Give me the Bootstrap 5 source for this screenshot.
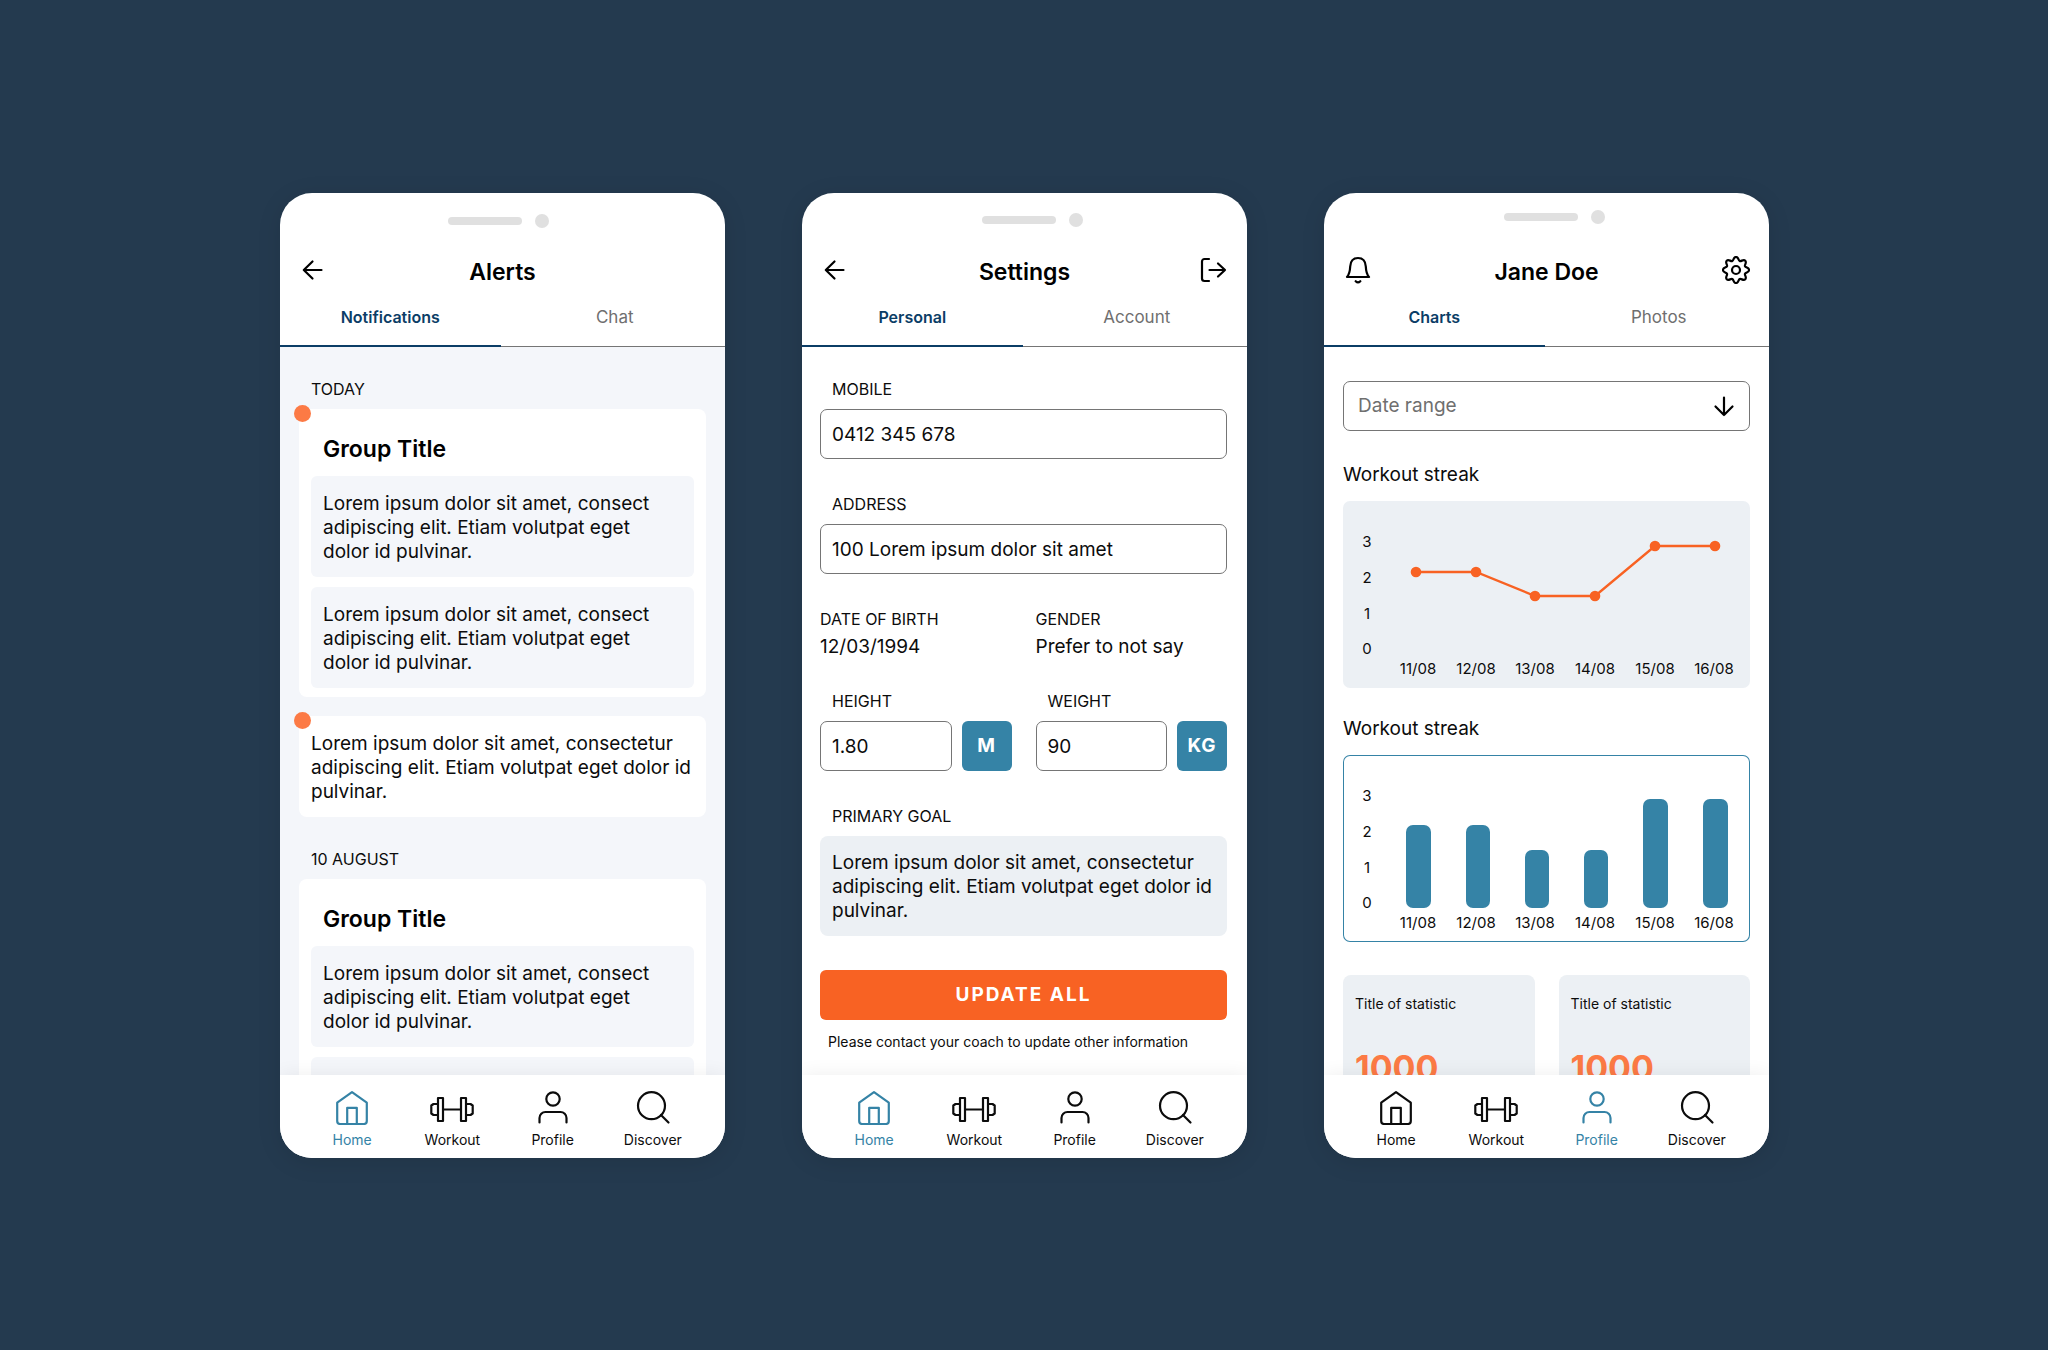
<!DOCTYPE html>
<html lang="en">
<head>
<meta charset="utf-8">
<meta name="viewport" content="width=device-width, initial-scale=1">
<title>Fitness app screens</title>
<link href="https://cdn.jsdelivr.net/npm/bootstrap@5.3.0/dist/css/bootstrap.min.css" rel="stylesheet">
<style>
  :root {
    --navy: #0b3d66;
    --teal: #3583a6;
    --orange: #f86223;
    --coral: #fc7a45;
    --mist: #ecf0f4;
    --haze: #f4f6fa;
    --line: #757575;
  }
  body {
    background: #243a4f;
    color: #0c0c0c;
    font-family: Inter, "Liberation Sans", sans-serif;
    font-size: 19px;
    line-height: 24px;
  }
  .stage { gap: 77px; padding: 1px 0 0 1px; }
  .phone {
    flex: 0 1 445px;
    min-width: 400px;
    aspect-ratio: 445 / 965;
    border-radius: 32px;
    box-shadow: 0 4px 24px rgba(0, 0, 0, .1);
  }
  .earpiece { height: 50px; gap: 13px; padding: 21px 8px 0 0; }
  .earpiece-offset { padding: 20px 0 0 16px; }
  .earpiece-high { padding: 17px 0 0 16px; }
  .earpiece-bar { width: 74px; height: 8px; margin-top: 3px; border-radius: 4px; background: #e0e0e0; }
  .earpiece-dot { width: 14px; height: 14px; border-radius: 50%; background: #e0e0e0; }

  .topbar { height: 54px; padding: 0 19px; }
  .topbar h1 { padding-top: 3px; font-size: 23px; font-weight: 600; line-height: 30px; color: #000; }
  .icon-btn { width: 28px; height: 28px; color: #000; line-height: 0; }

  .tabs .nav-link {
    padding: 8px 0 16px 4px;
    border-radius: 0;
    font-size: 17px;
    color: #6f6f6f;
    border-bottom: 2px solid transparent;
    background: linear-gradient(var(--line), var(--line)) bottom / 100% 1px no-repeat border-box;
  }
  .tabs .nav-link.active {
    padding: 8px 0 16px;
    color: var(--navy);
    font-size: 16px;
    font-weight: 600;
    border-bottom-color: var(--navy);
    background: none;
  }

  .screen { min-height: 0; padding: 32px 20px 0 18px; }
  .screen-feed { padding: 32px 19px 0; background: var(--haze); }
  .screen-stats { padding: 34px 19px 0; }

  .cap { display: block; margin: 0 0 10px 12px; font-size: 16px; line-height: 20px; font-weight: 400; text-transform: uppercase; }
  .cap-flush { margin: 0 0 6px; }

  .tile { border-radius: 8px; background: #fff; }
  .tile-group { padding: 28px 12px 9px; }
  .tile-group h2 { margin: 0 12px 15px; font-size: 23px; line-height: 24px; font-weight: 600; color: #000; }
  .tile-note { padding: 16px 12px 13px; }
  .tile-haze { min-height: 101px; padding-right: 28px; border-radius: 6px; background: var(--haze); }
  .stack { gap: 10px; }
  .feed-gap { margin-bottom: 19px; }
  .day-gap { margin-bottom: 32px; }
  .unread { position: absolute; top: -4px; left: -5px; width: 17px; height: 17px; border-radius: 50%; background: var(--coral); }

  .field { height: 50px; padding: 1px 11px 0; border: 1px solid var(--line); border-radius: 7px; font-size: 19px; line-height: 24px; color: #0c0c0c; background: #fff; }
  .field-gap { margin-bottom: 35px; }
  .fact-gap { margin-bottom: 32px; }
  .cols { column-gap: 24px; }
  .cols > * { flex: 1 1 0; min-width: 0; }
  .unit { flex: none; width: 50px; height: 50px; padding: 0; border: 0; border-radius: 6px; background: var(--teal); color: #fff; font-size: 19px; font-weight: 700; letter-spacing: 1px; }
  .goal { display: block; padding: 15px 12px 13px; border: 0; border-radius: 8px; background: var(--mist); font-size: 19px; line-height: 24px; color: #0c0c0c; resize: none; overflow: hidden; margin-bottom: 34px; }
  .update { height: 50px; padding: 0; border: 0; border-radius: 6px; background: var(--orange); color: #fff; font-size: 19px; font-weight: 700; letter-spacing: 2px; margin-bottom: 12px; }
  .fine { font-size: 14px; line-height: 20px; }
  .fine-inset { margin-left: 8px; }

  .range-field { padding: 0 48px 0 14px; color: #6f6f6f; background-image: none; }
  .range-arrow { position: absolute; top: 11px; right: 12px; width: 28px; height: 28px; pointer-events: none; color: #000; }
  .range-gap { margin-bottom: 32px; }
  .chart-name { margin: 0 0 14px; font-size: 19px; line-height: 24px; font-weight: 400; }
  .chart { display: block; width: 100%; height: auto; border-radius: 7px; font-size: 15px; fill: #0c0c0c; }
  .chart-filled { background: var(--mist); margin-bottom: 29px; }
  .chart-outlined { box-shadow: inset 0 0 0 1px var(--teal); margin-bottom: 33px; }
  .stat { height: 160px; padding: 19px 12px; border-radius: 8px; background: var(--mist); }
  .stat-value { margin-top: 34px; font-size: 34px; line-height: 40px; font-weight: 700; color: var(--coral); }

  .tabbar { position: relative; height: 83px; padding: 16px 22px 0 22px; background: #fff; box-shadow: 0 0 18px rgba(0, 0, 0, .07); }
  .tabbar a { flex: 1 1 0; color: #0c0c0c; text-decoration: none; font-size: 14px; line-height: 20px; }
  .tabbar a.active { color: var(--teal); }
  .tabbar svg { display: block; width: 44px; height: 34px; margin-bottom: 5px; }
  symbol { fill: none; stroke: currentColor; stroke-width: 2.2; stroke-linecap: round; stroke-linejoin: round; }
</style>
</head>
<body>

<svg width="0" height="0" class="position-absolute" aria-hidden="true">
  <symbol id="i-back" viewBox="0 0 28 28"><path d="M22.500 14H5M13.500 5.500 4.800 14l8.700 8.500"/></symbol>
  <symbol id="i-down" viewBox="0 0 28 28"><path d="M14 5.500V23M5.500 14.500 14 23l8.500-8.500"/></symbol>
  <symbol id="i-exit" viewBox="0 0 28 28"><path d="M9 3H4.500A2.500 2.500 0 0 0 2 5.500v17A2.500 2.500 0 0 0 4.500 25H9M9.500 14H25M18 7.500l7 6.500-7 6.500"/></symbol>
  <symbol id="i-bell" viewBox="0 0 28 28"><path d="M4 21C6.600 18 7 15 7.200 10.500 7.500 5 10.500 2 15 2s7.500 3 7.800 8.500C23 15 23.400 18 26 21zM12.700 25.200q2.300 2.300 4.600 0"/></symbol>
  <symbol id="i-gear" viewBox="0 0 28 28"><circle cx="14" cy="14" r="4"/><path d="M14.000 0.900 C16.600 0.900 16.100 4.200 17.700 5.000 C19.300 5.700 21.400 2.900 23.260 4.740 C25.100 6.600 22.300 8.700 23.000 10.300 C23.800 11.900 27.100 11.400 27.100 14.000 C27.100 16.600 23.800 16.100 23.000 17.700 C22.300 19.300 25.100 21.400 23.260 23.260 C21.400 25.100 19.300 22.300 17.700 23.000 C16.100 23.800 16.600 27.100 14.000 27.100 C11.400 27.100 11.900 23.800 10.300 23.000 C8.700 22.300 6.600 25.100 4.740 23.260 C2.900 21.400 5.700 19.300 5.000 17.700 C4.200 16.100 0.900 16.600 0.900 14.000 C0.900 11.400 4.200 11.900 5.000 10.300 C5.700 8.700 2.900 6.600 4.740 4.740 C6.600 2.900 8.700 5.700 10.300 5.000 C11.900 4.200 11.400 0.900 14.000 0.900z"/></symbol>
  <symbol id="i-home" viewBox="0 0 44 34"><path d="M7.200 11.700 22 1.200l14.800 10.500V30a3 3 0 0 1-3 3H10.200a3 3 0 0 1-3-3zM17.200 33V16.800h9.600V33"/></symbol>
  <symbol id="i-gym" viewBox="0 0 44 34"><path d="M8 7h5v23H8zM31 7h5v23h-5zM8 13H3.500L1.300 14.500v8L3.500 24H8M36 13h4.500l2.200 1.500v8L40.500 24H36M13 18.500h18"/></symbol>
  <symbol id="i-user" viewBox="0 0 44 34"><circle cx="22" cy="8" r="6.700"/><path d="M8.500 31.500V27a6 6 0 0 1 6-6h15a6 6 0 0 1 6 6v4.500"/></symbol>
  <symbol id="i-find" viewBox="0 0 44 34"><circle cx="20.500" cy="14.700" r="13.500"/><path d="m30 24 7.500 7.500"/></symbol>
</svg>

<main class="stage min-vh-100 d-flex flex-wrap justify-content-center align-items-center align-content-center">

  <section class="phone bg-white overflow-hidden d-flex flex-column" aria-label="Alerts">
    <div class="earpiece d-flex justify-content-center flex-shrink-0"><span class="earpiece-bar"></span><span class="earpiece-dot"></span></div>
    <header class="topbar d-flex justify-content-between align-items-center flex-shrink-0">
      <button class="icon-btn border-0 bg-transparent p-0" aria-label="Back"><svg width="28" height="28"><use href="#i-back"/></svg></button>
      <h1 class="m-0">Alerts</h1>
      <span class="icon-btn"></span>
    </header>
    <nav class="tabs nav nav-fill nav-justified flex-shrink-0"><a class="nav-link active" href="#">Notifications</a><a class="nav-link" href="#">Chat</a></nav>
    <div class="screen screen-feed flex-grow-1 overflow-hidden">
      <h2 class="cap">Today</h2>
      <article class="tile tile-group feed-gap position-relative">
        <span class="unread"></span>
        <h2>Group Title</h2>
        <div class="stack d-flex flex-column">
          <p class="tile-note tile-haze m-0">Lorem ipsum dolor sit amet, consect adipiscing elit. Etiam volutpat eget dolor id pulvinar.</p>
          <p class="tile-note tile-haze m-0">Lorem ipsum dolor sit amet, consect adipiscing elit. Etiam volutpat eget dolor id pulvinar.</p>
        </div>
      </article>
      <article class="tile tile-note day-gap position-relative">
        <span class="unread"></span>
        Lorem ipsum dolor sit amet, consectetur adipiscing elit. Etiam volutpat eget dolor id pulvinar.
      </article>
      <h2 class="cap">10 August</h2>
      <article class="tile tile-group">
        <h2>Group Title</h2>
        <div class="stack d-flex flex-column">
          <p class="tile-note tile-haze m-0">Lorem ipsum dolor sit amet, consect adipiscing elit. Etiam volutpat eget dolor id pulvinar.</p>
          <p class="tile-note tile-haze m-0"></p>
        </div>
      </article>
    </div>
    <nav class="tabbar d-flex flex-shrink-0" aria-label="Main">
      <a class="active d-flex flex-column align-items-center" href="#"><svg><use href="#i-home"/></svg>Home</a>
      <a class="d-flex flex-column align-items-center" href="#"><svg><use href="#i-gym"/></svg>Workout</a>
      <a class="d-flex flex-column align-items-center" href="#"><svg><use href="#i-user"/></svg>Profile</a>
      <a class="d-flex flex-column align-items-center" href="#"><svg><use href="#i-find"/></svg>Discover</a>
    </nav>
  </section>

  <section class="phone bg-white overflow-hidden d-flex flex-column" aria-label="Settings">
    <div class="earpiece earpiece-offset d-flex justify-content-center flex-shrink-0"><span class="earpiece-bar"></span><span class="earpiece-dot"></span></div>
    <header class="topbar d-flex justify-content-between align-items-center flex-shrink-0">
      <button class="icon-btn border-0 bg-transparent p-0" aria-label="Back"><svg width="28" height="28"><use href="#i-back"/></svg></button>
      <h1 class="m-0">Settings</h1>
      <button class="icon-btn border-0 bg-transparent p-0" aria-label="Log out"><svg width="28" height="28"><use href="#i-exit"/></svg></button>
    </header>
    <nav class="tabs nav nav-fill nav-justified flex-shrink-0"><a class="nav-link active" href="#">Personal</a><a class="nav-link" href="#">Account</a></nav>
    <form class="screen flex-grow-1 overflow-hidden">
      <label class="cap" for="mobile">Mobile</label>
      <input class="form-control field field-gap" id="mobile" type="tel" value="0412 345 678">
      <label class="cap" for="address">Address</label>
      <input class="form-control field field-gap" id="address" type="text" value="100 Lorem ipsum dolor sit amet">
      <div class="cols d-flex fact-gap">
        <div><span class="cap cap-flush">Date of birth</span><div>12/03/1994</div></div>
        <div><span class="cap cap-flush">Gender</span><div>Prefer to not say</div></div>
      </div>
      <div class="cols d-flex field-gap">
        <div>
          <label class="cap" for="height">Height</label>
          <div class="stack d-flex"><input class="form-control field" id="height" type="text" value="1.80"><button type="button" class="unit">M</button></div>
        </div>
        <div>
          <label class="cap" for="weight">Weight</label>
          <div class="stack d-flex"><input class="form-control field" id="weight" type="text" value="90"><button type="button" class="unit">KG</button></div>
        </div>
      </div>
      <label class="cap" for="goal">Primary goal</label>
      <textarea class="goal w-100" id="goal" rows="3">Lorem ipsum dolor sit amet, consectetur adipiscing elit. Etiam volutpat eget dolor id pulvinar.</textarea>
      <button type="button" class="update w-100 d-block">UPDATE ALL</button>
      <p class="fine fine-inset mb-0">Please contact your coach to update other information</p>
    </form>
    <nav class="tabbar d-flex flex-shrink-0" aria-label="Main">
      <a class="active d-flex flex-column align-items-center" href="#"><svg><use href="#i-home"/></svg>Home</a>
      <a class="d-flex flex-column align-items-center" href="#"><svg><use href="#i-gym"/></svg>Workout</a>
      <a class="d-flex flex-column align-items-center" href="#"><svg><use href="#i-user"/></svg>Profile</a>
      <a class="d-flex flex-column align-items-center" href="#"><svg><use href="#i-find"/></svg>Discover</a>
    </nav>
  </section>

  <section class="phone bg-white overflow-hidden d-flex flex-column" aria-label="Profile">
    <div class="earpiece earpiece-high d-flex justify-content-center flex-shrink-0"><span class="earpiece-bar"></span><span class="earpiece-dot"></span></div>
    <header class="topbar d-flex justify-content-between align-items-center flex-shrink-0">
      <button class="icon-btn border-0 bg-transparent p-0" aria-label="Alerts"><svg width="28" height="28"><use href="#i-bell"/></svg></button>
      <h1 class="m-0">Jane Doe</h1>
      <button class="icon-btn border-0 bg-transparent p-0" aria-label="Settings"><svg width="28" height="28"><use href="#i-gear"/></svg></button>
    </header>
    <nav class="tabs nav nav-fill nav-justified flex-shrink-0"><a class="nav-link active" href="#">Charts</a><a class="nav-link" href="#">Photos</a></nav>
    <div class="screen screen-stats flex-grow-1 overflow-hidden">
      <div class="position-relative range-gap">
        <select class="form-select field range-field" aria-label="Date range"><option>Date range</option></select>
        <svg class="range-arrow"><use href="#i-down"/></svg>
      </div>
      <h2 class="chart-name">Workout streak</h2>
      <svg class="chart chart-filled" viewBox="0 0 407 187" role="img" aria-label="Workout streak line chart">
        <g text-anchor="middle">
          <text x="24" y="46">3</text><text x="24" y="82">2</text><text x="24" y="118">1</text><text x="24" y="153">0</text>
          <text x="75" y="173">11/08</text><text x="133" y="173">12/08</text><text x="192" y="173">13/08</text><text x="252" y="173">14/08</text><text x="312" y="173">15/08</text><text x="371" y="173">16/08</text>
        </g>
        <polyline points="73,71 133,71 192,95 252,95 312,45 372,45" fill="none" stroke="#f86223" stroke-width="2.300"/>
        <g fill="#f86223"><circle cx="73" cy="71" r="5.300"/><circle cx="133" cy="71" r="5.300"/><circle cx="192" cy="95" r="5.300"/><circle cx="252" cy="95" r="5.300"/><circle cx="312" cy="45" r="5.300"/><circle cx="372" cy="45" r="5.300"/></g>
      </svg>
      <h2 class="chart-name">Workout streak</h2>
      <svg class="chart chart-outlined" viewBox="0 0 407 187" role="img" aria-label="Workout streak bar chart">
        <g text-anchor="middle">
          <text x="24" y="46">3</text><text x="24" y="82">2</text><text x="24" y="118">1</text><text x="24" y="153">0</text>
          <text x="75" y="173">11/08</text><text x="133" y="173">12/08</text><text x="192" y="173">13/08</text><text x="252" y="173">14/08</text><text x="312" y="173">15/08</text><text x="371" y="173">16/08</text>
        </g>
        <g fill="#3583a6"><rect x="63" y="70" width="25" height="83" rx="7"/><rect x="123" y="70" width="24" height="83" rx="7"/><rect x="182" y="95" width="24" height="58" rx="7"/><rect x="241" y="95" width="24" height="58" rx="7"/><rect x="300" y="44" width="25" height="109" rx="7"/><rect x="360" y="44" width="25" height="109" rx="7"/></g>
      </svg>
      <div class="cols d-flex">
        <div class="stat"><div class="fine">Title of statistic</div><div class="stat-value">1000</div></div>
        <div class="stat"><div class="fine">Title of statistic</div><div class="stat-value">1000</div></div>
      </div>
    </div>
    <nav class="tabbar d-flex flex-shrink-0" aria-label="Main">
      <a class="d-flex flex-column align-items-center" href="#"><svg><use href="#i-home"/></svg>Home</a>
      <a class="d-flex flex-column align-items-center" href="#"><svg><use href="#i-gym"/></svg>Workout</a>
      <a class="active d-flex flex-column align-items-center" href="#"><svg><use href="#i-user"/></svg>Profile</a>
      <a class="d-flex flex-column align-items-center" href="#"><svg><use href="#i-find"/></svg>Discover</a>
    </nav>
  </section>

</main>
<script src="https://cdn.jsdelivr.net/npm/bootstrap@5.3.0/dist/js/bootstrap.bundle.min.js"></script>
</body>
</html>
